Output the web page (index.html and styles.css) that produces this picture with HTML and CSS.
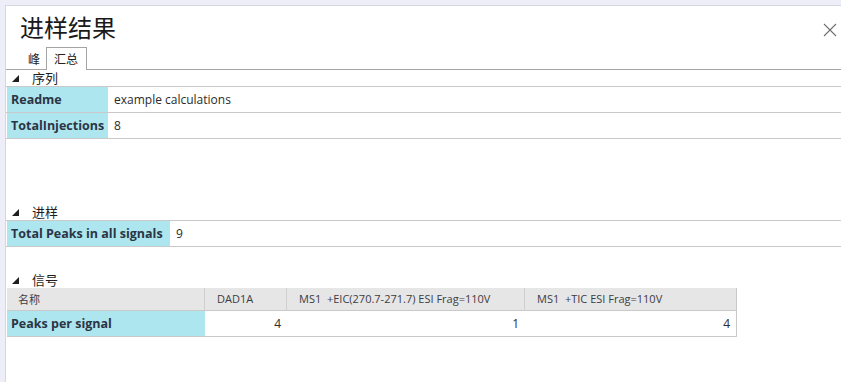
FILE: index.html
```html
<!DOCTYPE html>
<html>
<head>
<meta charset="utf-8">
<link rel="stylesheet" href="styles.css">
</head>
<body>
<div class="panel">
  <div class="titlebar">
    <h1 class="title">进样结果</h1>
    <button class="close" aria-label="close">
      <svg width="14" height="14" viewBox="0 0 14 14"><path d="M1 1L13 13M13 1L1 13" stroke="#6f6f6f" stroke-width="1.1" fill="none"/></svg>
    </button>
  </div>
  <div class="tabs">
    <span class="tab">峰</span>
    <span class="tab active">汇总</span>
  </div>

  <section class="section sec-seq">
    <div class="sec-head"><span class="tri"></span><span class="sec-title">序列</span></div>
    <div class="rows">
      <div class="row"><div class="label w1">Readme</div><div class="value">example calculations</div></div>
      <div class="row"><div class="label w1">TotalInjections</div><div class="value">8</div></div>
    </div>
  </section>

  <section class="section sec-inj">
    <div class="sec-head"><span class="tri"></span><span class="sec-title">进样</span></div>
    <div class="rows">
      <div class="row"><div class="label w2">Total Peaks in all signals</div><div class="value">9</div></div>
    </div>
  </section>

  <section class="section sec-sig">
    <div class="sec-head"><span class="tri"></span><span class="sec-title">信号</span></div>
    <div class="grid">
      <div class="gh c1">名称</div>
      <div class="gh c2">DAD1A</div>
      <div class="gh c3">MS1  +EIC(270.7-271.7) ESI Frag=110V</div>
      <div class="gh c4">MS1  +TIC ESI Frag=110V</div>
      <div class="gl">Peaks per signal</div>
      <div class="gv">4</div>
      <div class="gv">1</div>
      <div class="gv">4</div>
    </div>
  </section>
</div>
</body>
</html>
```
FILE: styles.css
```css
html, body {
  margin: 0;
  padding: 0;
  background: #eeeef8;
  height: 100%;
  overflow: hidden;
}
body {
  font-family: "Open Sans", "Noto Sans", "Noto Sans CJK SC", sans-serif;
  color: #2e3440;
  font-size: 12px;
}
.panel {
  margin: 5px 0 0 5px;
  background: #fff;
  border-top: 1px solid #d6d6e0;
  border-left: 1px solid #d6d6e0;
  height: 376px;
}
.titlebar {
  height: 40px;
  display: flex;
  align-items: flex-start;
  justify-content: space-between;
}
.title {
  margin: 6px 0 0 14px;
  font-family: "Noto Sans CJK SC", sans-serif;
  font-weight: 400;
  font-size: 24px;
  line-height: 30px;
  color: #1a1a1a;
}
.close {
  border: 0;
  background: none;
  padding: 0;
  margin: 17px 4px 0 0;
  width: 14px;
  height: 14px;
  display: block;
}
.close svg { display: block; }
.tabs {
  display: flex;
  align-items: flex-end;
  height: 23px;
  border-bottom: 1px solid #a4a4a4;
  padding-left: 21px;
}
.tab {
  font-family: "Noto Sans CJK SC", sans-serif;
  font-size: 12px;
  line-height: 20px;
  padding: 0 6px 0 1px;
  color: #222;
}
.tab.active {
  border: 1px solid #a4a4a4;
  border-bottom: 0;
  background: #fff;
  height: 23px;
  line-height: 21px;
  padding: 0 8px 0 7px;
  margin-bottom: -1px;
  box-sizing: border-box;
}
.sec-head {
  display: flex;
  align-items: center;
  height: 16px;
}
.tri {
  width: 0;
  height: 0;
  border-left: 7px solid transparent;
  border-bottom: 7px solid #1e1e1e;
  margin: 0 0 0 6px;
}
.sec-title {
  font-family: "Noto Sans CJK SC", sans-serif;
  font-size: 13px;
  line-height: 16px;
  margin-left: 13px;
  color: #1e1e1e;
}
.rows {
  border-top: 1px solid #c9c9c9;
}
.row {
  display: flex;
  height: 26px;
  border-bottom: 1px solid #c9c9c9;
  box-sizing: border-box;
}
.label {
  background: #ade6ef;
  font-weight: 700;
  font-size: 12.5px;
  line-height: 25px;
  padding-left: 4px;
  box-sizing: border-box;
  margin-left: 1px;
  color: #2b3444;
  white-space: nowrap;
  overflow: hidden;
}
.w1 { width: 101px; }
.w2 { width: 163px; }
.value {
  padding-left: 6px;
  line-height: 25px;
  font-size: 12px;
  color: #2b2b2b;
}
.sec-seq { height: 134px; }
.sec-inj { height: 68px; }
.grid {
  display: grid;
  grid-template-columns: 198px 82px 238px 211px;
  width: 729px;
  margin-left: 1px;
  border-right: 1px solid #c9c9c9;
  border-bottom: 1px solid #c9c9c9;
}
.gh {
  background: #e6e6e6;
  height: 23px;
  line-height: 22px;
  border-bottom: 1px solid #c9c9c9;
  border-right: 1px solid #cfcfcf;
  box-sizing: border-box;
  padding-left: 12px;
  font-size: 11px;
  color: #3c3c44;
  white-space: pre;
  overflow: hidden;
}
.gh.c1 { font-family: "Noto Sans CJK SC", sans-serif; padding-left: 11px; }
.gh.c4 { border-right: 0; }
.gl {
  background: #ade6ef;
  font-weight: 700;
  font-size: 12.5px;
  height: 25px;
  line-height: 25px;
  padding-left: 4px;
  color: #2b3444;
}
.gv {
  text-align: right;
  padding-right: 6px;
  line-height: 25px;
  font-size: 12px;
  color: #2b2b2b;
}
```
